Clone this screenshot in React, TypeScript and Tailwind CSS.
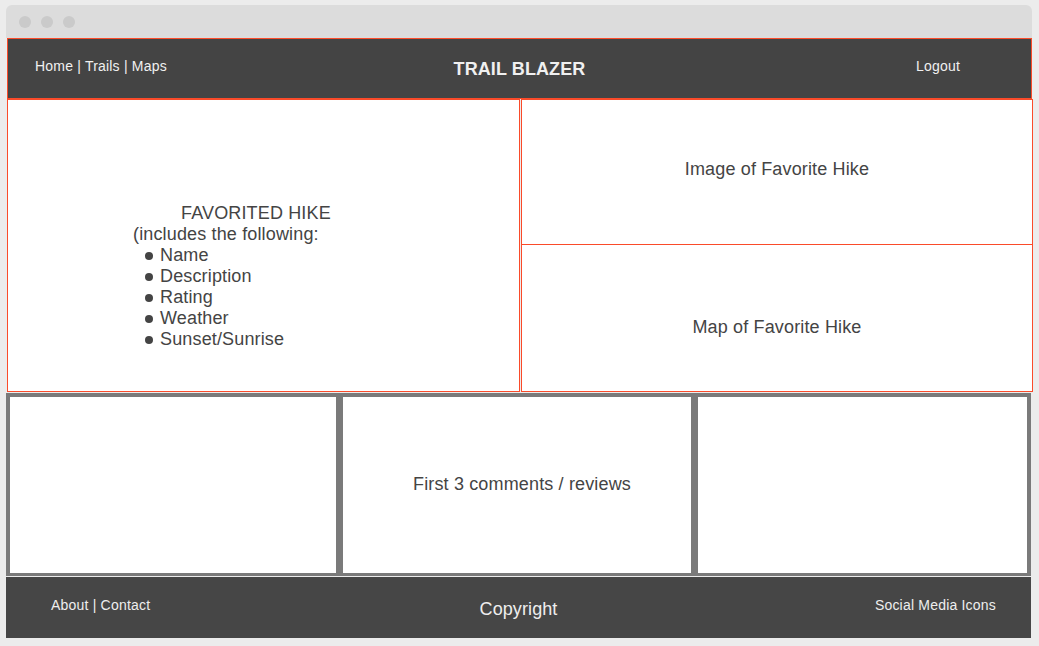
import React from 'react';

const items = ['Name', 'Description', 'Rating', 'Weather', 'Sunset/Sunrise'];

const App = () => {
    return (
        <div className="w-[1039px] h-[646px] bg-[#ececec] pl-[6px] pt-[5px] font-['Liberation_Sans',Arial,sans-serif] overflow-hidden">
            {/* window title bar */}
            <div className="w-[1026px] h-[33px] bg-[#dcdcdc] rounded-t-[6px] flex items-center gap-[10px] pl-[13px]">
                <span className="w-3 h-3 rounded-full bg-[#cacaca]" />
                <span className="w-3 h-3 rounded-full bg-[#cacaca]" />
                <span className="w-3 h-3 rounded-full bg-[#cacaca]" />
            </div>

            {/* header */}
            <header className="ml-px w-[1025px] h-[61px] bg-[#444444] border border-[#fa4b2a] grid grid-cols-[1fr_auto_1fr] items-center text-[#f0f0f0]">
                <div className="pl-[27px] mb-[5px] text-[14px] tracking-[0.2px]">Home | Trails | Maps</div>
                <div className="text-[18px] font-bold tracking-[0.1px] mt-[2px]">TRAIL BLAZER</div>
                <div className="text-right pr-[71px] mb-[5px] text-[14px] tracking-[0.2px]">Logout</div>
            </header>

            {/* main */}
            <div className="ml-px flex gap-px h-[293px] text-[#444444] text-[18px] tracking-[0.15px]">
                <div className="w-[513px] bg-white border border-[#fa4b2a] pt-[103px] pl-[125px] leading-[21px]">
                    <div className="pl-[48px]">FAVORITED HIKE</div>
                    <div>(includes the following:</div>
                    <ul className="pl-[12px]">
                        {items.map((item) => (
                            <li key={item} className="flex items-center">
                                <span className="w-[8px] h-[8px] rounded-full bg-[#444444] mr-[7px] mt-[1px]" />
                                {item}
                            </li>
                        ))}
                    </ul>
                </div>
                <div className="w-[512px] bg-white border border-[#fa4b2a] flex flex-col">
                    <div className="h-[145px] border-b border-[#fa4b2a] flex items-center justify-center pb-[6px]">
                        Image of Favorite Hike
                    </div>
                    <div className="flex-1 flex items-center justify-center pt-[18px]">
                        Map of Favorite Hike
                    </div>
                </div>
            </div>

            {/* comments */}
            <div className="mt-px w-[1025px] h-[183px] bg-[#7a7a7a] pt-[4px] pb-[3px] px-[4px] flex gap-[7px]">
                <div className="w-[326px] bg-white" />
                <div className="w-[348px] bg-white flex items-center justify-center pl-[10px] pb-[2px] text-[18px] text-[#444444] tracking-[0.15px]">
                    First 3 comments / reviews
                </div>
                <div className="flex-1 bg-white" />
            </div>

            {/* footer */}
            <footer className="mt-px w-[1025px] h-[61px] bg-[#464646] grid grid-cols-[1fr_auto_1fr] items-center text-[#eeeeee]">
                <div className="pl-[45px] mb-[4px] text-[14px] tracking-[0.2px]">About | Contact</div>
                <div className="text-[18px] mt-[3px] tracking-[0.1px]">Copyright</div>
                <div className="text-right pr-[35px] mb-[4px] text-[14px] tracking-[0.2px]">Social Media Icons</div>
            </footer>
        </div>
    );
};

export default App;
